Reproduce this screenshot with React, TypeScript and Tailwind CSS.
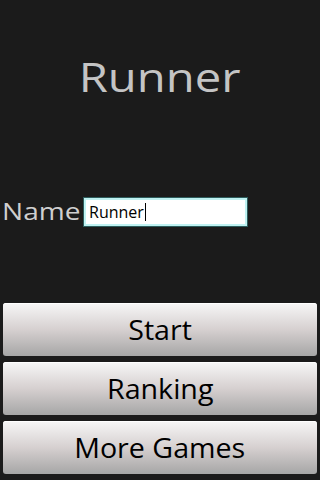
import React from 'react';

const font = { fontFamily: '"Open Sans", "Noto Sans", sans-serif' };

function MenuButton({ label }: { label: string }) {
  return (
    <button
      className="h-[53px] w-full rounded-[3px] bg-gradient-to-b from-[#f7f7f7] via-[#d6d0d0] to-[#a6a6a6] leading-none text-black shadow-[inset_0_1px_0_#ffffff]"
      style={font}
    >
      <span className="inline-block scale-x-[1.06] text-[27px]">{label}</span>
    </button>
  );
}

export default function App() {
  return (
    <div className="flex h-[480px] w-[320px] flex-col bg-[#1b1b1b]" style={font}>
      <h1 className="mt-[52px] text-center text-[40px] leading-[50px] text-[#c4c4c4]">
        <span className="inline-block scale-x-[1.18]">Runner</span>
      </h1>

      <div className="mt-[95px] flex items-center pl-[2px]">
        <div className="w-[81px]">
          <span className="inline-block origin-left scale-x-[1.17] text-[24px] leading-none text-[#cfcfcf]">Name</span>
        </div>
        <div className="flex h-[30px] w-[165px] items-center border border-[#2d5c5c] bg-white pl-[5px] shadow-[inset_0_0_0_2px_#bff2f2]">
          <span className="text-[16px] leading-none text-black">Runner</span>
          <span className="ml-[1px] h-[18px] w-px bg-black" />
        </div>
      </div>

      <div className="mt-auto flex flex-col gap-[6px] px-[3px] pb-[6px]">
        <MenuButton label="Start" />
        <MenuButton label="Ranking" />
        <MenuButton label="More Games" />
      </div>
    </div>
  );
}
